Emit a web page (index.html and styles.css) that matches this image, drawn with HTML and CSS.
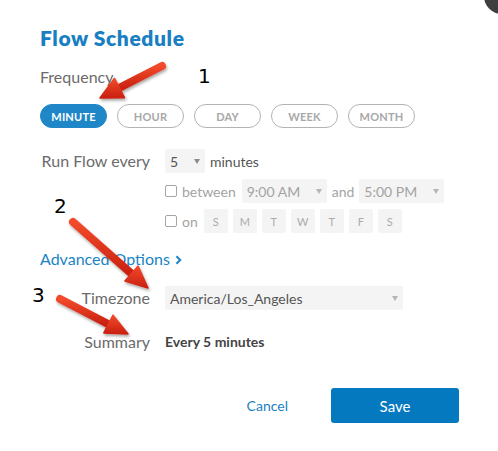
FILE: index.html
```html
<!DOCTYPE html>
<html lang="en">
<head>
<meta charset="utf-8">
<title>Flow Schedule</title>
<link rel="stylesheet" href="styles.css">
</head>
<body>
<div class="dialog">
  <span class="close-dot"></span>
  <h1 class="title">Flow Schedule</h1>
  <div class="freq">Frequency</div>
  <div class="pills">
    <span class="pill active">MINUTE</span>
    <span class="pill">HOUR</span>
    <span class="pill">DAY</span>
    <span class="pill">WEEK</span>
    <span class="pill">MONTH</span>
  </div>

  <div class="form form-run">
    <div class="lbl">Run Flow every</div>
    <div class="ctl">
      <span class="sel sel-num"><span class="val">5</span><span class="caret"></span></span>
      <span class="unit">minutes</span>
    </div>
    <div></div>
    <div class="ctl">
      <span class="cb"></span>
      <span class="muted word">between</span>
      <span class="sel sel-time"><span class="muted">9:00 AM</span><span class="caret light"></span></span>
      <span class="muted and">and</span>
      <span class="sel sel-time"><span class="muted">5:00 PM</span><span class="caret light"></span></span>
    </div>
    <div></div>
    <div class="ctl">
      <span class="cb"></span>
      <span class="muted word">on</span>
      <span class="days">
        <span class="day">S</span><span class="day">M</span><span class="day">T</span><span class="day">W</span><span class="day">T</span><span class="day">F</span><span class="day">S</span>
      </span>
    </div>
  </div>

  <div class="adv">Advanced Options <svg class="chev" width="7" height="10" viewBox="0 0 7 10"><path d="M1.5 1.2 L5.2 5 L1.5 8.8" fill="none" stroke="#1a84c6" stroke-width="2"/></svg></div>

  <div class="form form-adv">
    <div class="lbl">Timezone</div>
    <div class="ctl">
      <span class="sel sel-tz"><span class="val">America/Los_Angeles</span><span class="caret light"></span></span>
    </div>
    <div class="lbl">Summary</div>
    <div class="ctl summary">Every 5 minutes</div>
  </div>

  <div class="footer">
    <span class="cancel">Cancel</span>
    <span class="save">Save</span>
  </div>

  <svg class="annot" width="498" height="451" viewBox="0 0 498 451">
    <defs>
      <linearGradient id="red" x1="0" y1="0" x2="0" y2="1">
        <stop offset="0" stop-color="#f24a2c"/>
        <stop offset="1" stop-color="#c9200f"/>
      </linearGradient>
      <filter id="sh" x="-20%" y="-20%" width="140%" height="140%">
        <feDropShadow dx="1" dy="2" stdDeviation="1.5" flood-color="#000" flood-opacity="0.35"/>
      </filter>
    </defs>
    <g filter="url(#sh)" fill="url(#red)" stroke="url(#red)">
      <line x1="162" y1="66" x2="117" y2="89" stroke-width="8" stroke-linecap="round"/>
      <polygon points="100,98 124.5,97.7 114.5,78.3" stroke-width="1.5" stroke-linejoin="round"/>
      <line x1="73" y1="222" x2="133" y2="275" stroke-width="8" stroke-linecap="round"/>
      <polygon points="148,288 124.9,281 138.1,266" stroke-width="1.5" stroke-linejoin="round"/>
      <line x1="60" y1="299" x2="110" y2="325" stroke-width="8" stroke-linecap="round"/>
      <polygon points="128,334 103.8,332.9 113,315.1" stroke-width="1.5" stroke-linejoin="round"/>
    </g>
    <text class="num" x="198" y="83">1</text>
    <text class="num" x="54" y="213">2</text>
    <text class="num" x="32" y="302">3</text>
  </svg>
</div>
</body>
</html>
```

FILE: styles.css
```css
html, body {
  margin: 0;
  padding: 0;
  background: #fff;
}
body {
  width: 498px;
  height: 451px;
  overflow: hidden;
  font-family: Lato, "Liberation Sans", Arial, sans-serif;
}
.dialog {
  position: relative;
  height: 451px;
  box-sizing: border-box;
  padding: 26px 39px 0 40px;
}
.close-dot {
  position: absolute;
  left: 484px;
  top: -22px;
  width: 36px;
  height: 36px;
  border-radius: 50%;
  background: #3e3e3e;
}
.title {
  margin: 0;
  font-size: 21px;
  line-height: 24px;
  font-weight: 800;
  letter-spacing: 0.6px;
  color: #1a7fc2;
}
.freq {
  margin-top: 17px;
  font-size: 16px;
  line-height: 20px;
  color: #6b6b6b;
}
.pills {
  display: flex;
  gap: 10px;
  margin-top: 17px;
}
.pill {
  width: 67px;
  height: 24px;
  box-sizing: border-box;
  border: 1px solid #b3b3b3;
  border-radius: 12px;
  display: flex;
  align-items: center;
  justify-content: center;
  font-size: 11px;
  font-weight: 700;
  color: #a8a8a8;
  letter-spacing: 0.2px;
}
.pill.active {
  background: #1f86c8;
  border-color: #1f86c8;
  color: #fff;
}
.form {
  display: grid;
  grid-template-columns: 110px auto;
  column-gap: 15px;
  align-items: center;
}
.form-run {
  margin-top: 21px;
  row-gap: 6px;
}
.form-adv {
  margin-top: 17px;
  row-gap: 22px;
}
.lbl {
  text-align: right;
  font-size: 16px;
  line-height: 20px;
  color: #6b6b6b;
}
.ctl {
  display: flex;
  align-items: center;
  min-height: 20px;
  font-size: 14px;
  color: #555;
}
.sel {
  height: 24px;
  box-sizing: border-box;
  padding: 0 5px;
  background: #f4f4f4;
  border-radius: 2px;
  display: flex;
  align-items: center;
  justify-content: space-between;
}
.sel-num {
  width: 40px;
  color: #555;
}
.sel-time {
  width: 85px;
}
.sel-tz {
  width: 238px;
  color: #555;
}
.caret {
  width: 0;
  height: 0;
  border-left: 3px solid transparent;
  border-right: 3px solid transparent;
  border-top: 5px solid #8c8c8c;
}
.caret.light {
  border-top-color: #b5b5b5;
}
.unit {
  margin-left: 5px;
}
.cb {
  width: 12px;
  height: 12px;
  box-sizing: border-box;
  border: 1px solid #a5a5a5;
  border-radius: 2px;
  background: #fff;
}
.muted {
  color: #a3a3a3;
}
.word {
  margin: 0 6px 0 5px;
}
.and {
  margin: 0 5px;
}
.days {
  display: flex;
  gap: 5px;
}
.day {
  width: 24px;
  height: 24px;
  background: #f4f4f4;
  border-radius: 2px;
  color: #ababab;
  font-size: 11px;
  display: flex;
  align-items: center;
  justify-content: center;
}
.adv {
  margin-top: 16px;
  font-size: 16px;
  line-height: 20px;
  color: #1a84c6;
}
.chev {
  margin-left: 1px;
}
.summary {
  font-weight: 700;
  color: #444;
  line-height: 20px;
}
.footer {
  margin-top: 36px;
  display: flex;
  justify-content: flex-end;
  align-items: center;
  gap: 43px;
}
.cancel {
  font-size: 14px;
  color: #1a7fc1;
}
.save {
  width: 128px;
  height: 35px;
  border-radius: 3px;
  background: #0479bf;
  color: #fff;
  font-size: 15px;
  display: flex;
  align-items: center;
  justify-content: center;
}
.annot {
  position: absolute;
  left: 0;
  top: 0;
  pointer-events: none;
}
.num {
  font-family: "DejaVu Sans", sans-serif;
  font-size: 20px;
  fill: #000;
}
```
